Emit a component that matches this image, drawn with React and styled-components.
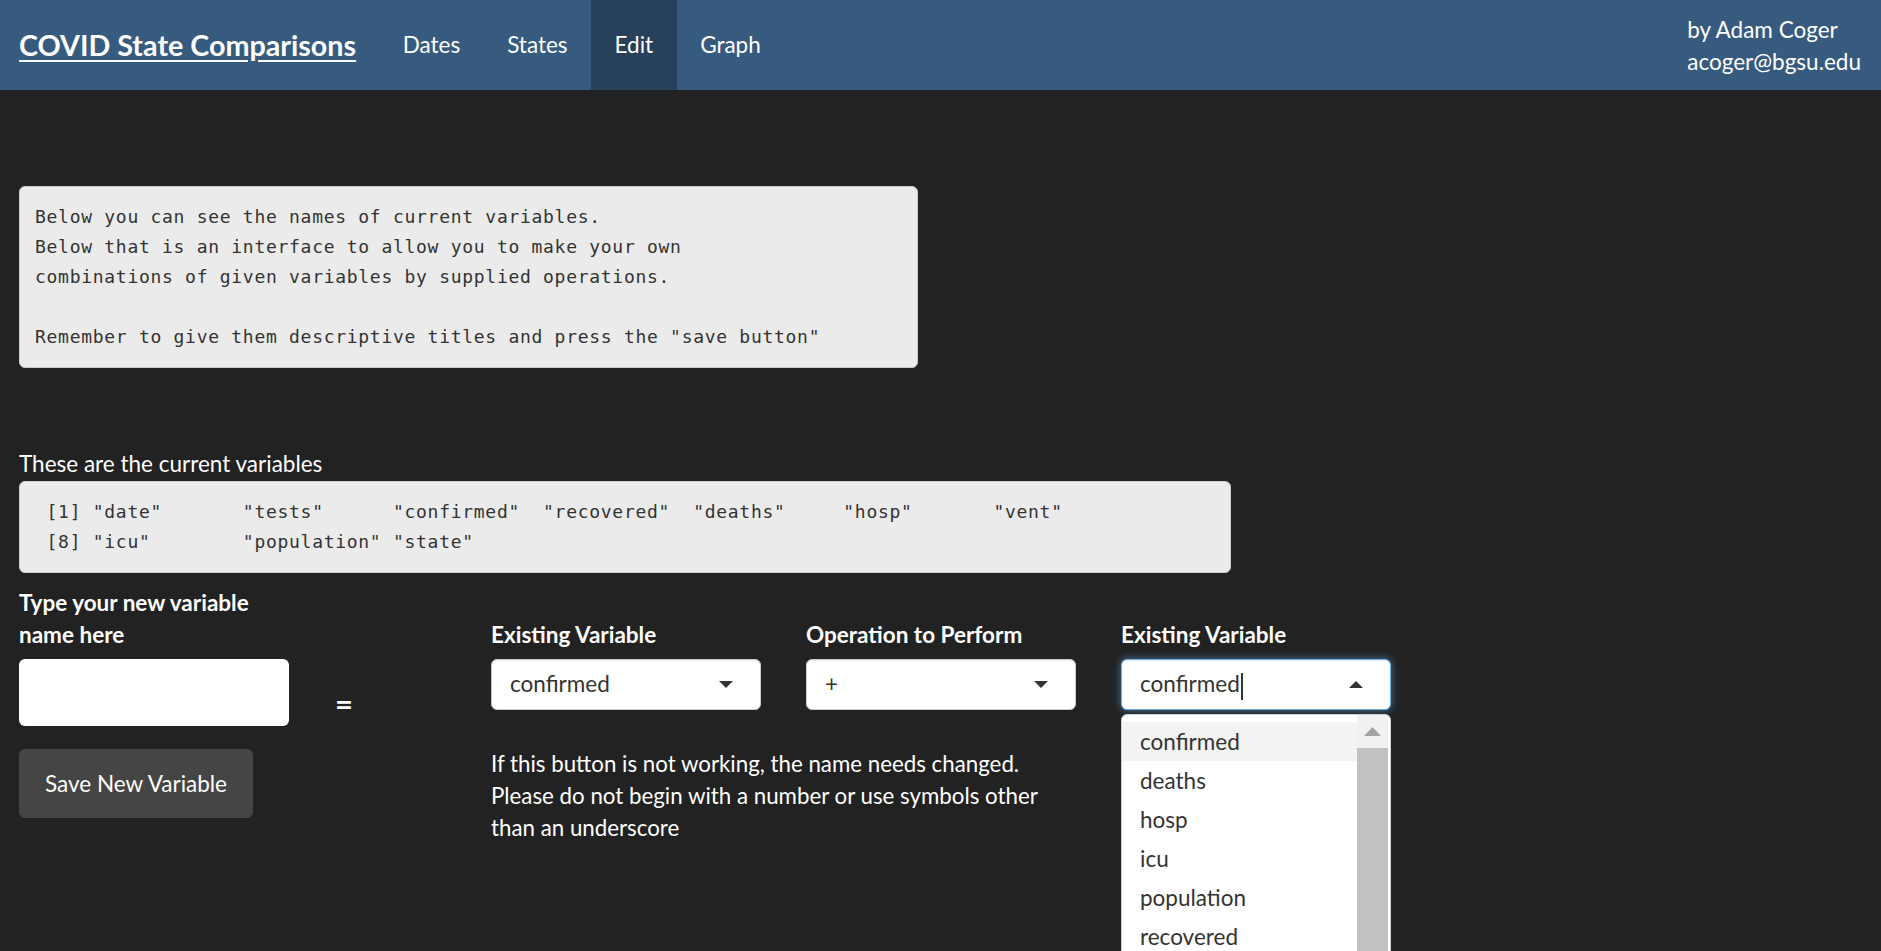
import React from 'react';
import styled, { createGlobalStyle } from 'styled-components';

const GlobalStyle = createGlobalStyle`
  html, body {
    margin: 0;
    padding: 0;
    height: 100%;
    overflow: hidden;
    background: #222222;
  }
  body {
    font-family: Lato, "Noto Sans", sans-serif;
    font-size: 22.5px;
    line-height: 32px;
    color: #ffffff;
  }
`;

const Navbar = styled.nav`
  display: flex;
  align-items: center;
  height: 90px;
  padding: 0 20px 0 19px;
  background: #375a7f;
`;

const Brand = styled.a`
  font-size: 28.7px;
  font-weight: 700;
  color: #fff;
  text-decoration: underline;
  text-underline-offset: 4px;
  padding-right: 23px;
`;

const NavLink = styled.a`
  display: flex;
  align-items: center;
  height: 90px;
  padding: 0 23.5px;
  color: #fff;
  background: ${(p) => (p.$active ? '#28415b' : 'transparent')};
`;

const Byline = styled.div`
  margin-left: auto;
  padding-top: 2px;
  line-height: 32px;
`;

const Main = styled.main`
  padding: 96px 19px 0;
`;

const Pre = styled.pre`
  margin: 0;
  padding: 15px;
  width: ${(p) => p.$width};
  box-sizing: border-box;
  background: #ebebeb;
  border: 1px solid #cccccc;
  border-radius: 6px;
  color: #333333;
  font-family: "DejaVu Sans Mono", "Liberation Mono", monospace;
  font-size: 18px;
  letter-spacing: 0.71px;
  line-height: 30px;
  white-space: pre;
`;

const Caption = styled.div`
  margin-top: 80px;
  margin-bottom: 1px;
`;

const Form = styled.div`
  display: grid;
  grid-template-columns: 270px 112px 270px 270px 270px;
  grid-template-areas:
    "name . lv op rv"
    "input eq lsel opsel rsel"
    "save . help help .";
  column-gap: 45px;
  margin-top: 14px;
  align-items: start;
`;

const Label = styled.label`
  grid-area: ${(p) => p.$area};
  align-self: end;
  font-weight: 700;
  margin-bottom: 7.5px;
`;

const TextInput = styled.input`
  grid-area: input;
  height: 67.5px;
  box-sizing: border-box;
  border: none;
  border-radius: 6px;
  background: #fff;
  font: inherit;
  padding: 0 22px;
`;

const Equals = styled.div`
  grid-area: eq;
  padding-top: 28px;
  padding-left: 1px;
  font-size: 31px;
  font-weight: 700;
`;

const SelectWrap = styled.div`
  grid-area: ${(p) => p.$area};
  position: relative;
`;

const SelectBox = styled.div`
  display: flex;
  align-items: center;
  justify-content: space-between;
  height: 51px;
  box-sizing: border-box;
  padding: 0 27px 0 18px;
  background: #fff;
  color: #333;
  border: 1px solid ${(p) => (p.$focused ? '#66afe9' : '#cccccc')};
  border-radius: 6px;
  box-shadow: ${(p) =>
    p.$focused
      ? 'inset 0 1px 1px rgba(0,0,0,.075), 0 0 8px rgba(102,175,233,.6)'
      : 'inset 0 1px 1px rgba(0,0,0,.075)'};
`;

const Cursor = styled.span`
  display: inline-block;
  width: 2px;
  height: 27px;
  background: #333;
  vertical-align: middle;
  margin-left: 1px;
`;

const Caret = styled.span`
  width: 0;
  height: 0;
  border-left: 7.5px solid transparent;
  border-right: 7.5px solid transparent;
  ${(p) => (p.$up ? 'border-bottom: 7.5px solid #333;' : 'border-top: 7.5px solid #333;')}
`;

const Dropdown = styled.div`
  position: absolute;
  top: calc(100% + 4px);
  left: 0;
  right: 0;
  height: 260px;
  display: flex;
  background: #fff;
  border: 1px solid #d0d0d0;
  border-radius: 6px 6px 0 0;
  overflow: hidden;
  z-index: 10;
`;

const OptionList = styled.div`
  flex: 1;
  padding-top: 7px;
`;

const Option = styled.div`
  height: 39px;
  line-height: 39px;
  padding: 0 18px;
  color: #333;
  background: ${(p) => (p.$active ? '#f3f3f3' : 'transparent')};
`;

const Scrollbar = styled.div`
  width: 31px;
  margin-right: 2px;
  display: flex;
  flex-direction: column;
  background: #f1f1f1;
`;

const ScrollArrow = styled.div`
  height: 33px;
  display: flex;
  align-items: center;
  justify-content: center;
`;

const Thumb = styled.div`
  flex: 1;
  background: #c1c1c1;
`;

const SaveButton = styled.button`
  grid-area: save;
  justify-self: start;
  margin-top: 23px;
  width: 234px;
  height: 69px;
  border: none;
  border-radius: 6px;
  background: #464545;
  color: #fff;
  font: inherit;
  line-height: 32px;
`;

const Help = styled.p`
  grid-area: help;
  margin: 22px 0 0;
  font-size: 22.3px;
`;

const options = ['confirmed', 'deaths', 'hosp', 'icu', 'population', 'recovered', 'state', 'tests', 'vent'];

const intro = `Below you can see the names of current variables.
Below that is an interface to allow you to make your own
combinations of given variables by supplied operations.

Remember to give them descriptive titles and press the "save button"`;

const vars = ` [1] "date"       "tests"      "confirmed"  "recovered"  "deaths"     "hosp"       "vent"
 [8] "icu"        "population" "state"`;

export default function App() {
  return (
    <>
      <GlobalStyle />
      <Navbar>
        <Brand>COVID State Comparisons</Brand>
        <NavLink>Dates</NavLink>
        <NavLink>States</NavLink>
        <NavLink $active>Edit</NavLink>
        <NavLink>Graph</NavLink>
        <Byline>
          by Adam Coger
          <br />
          acoger@bgsu.edu
        </Byline>
      </Navbar>
      <Main>
        <Pre $width="899px">{intro}</Pre>
        <Caption>These are the current variables</Caption>
        <Pre $width="1212px">{vars}</Pre>
        <Form>
          <Label $area="name">Type your new variable name here</Label>
          <Label $area="lv">Existing Variable</Label>
          <Label $area="op">Operation to Perform</Label>
          <Label $area="rv">Existing Variable</Label>

          <TextInput type="text" />
          <Equals>=</Equals>
          <SelectWrap $area="lsel">
            <SelectBox>
              <span>confirmed</span>
              <Caret />
            </SelectBox>
          </SelectWrap>
          <SelectWrap $area="opsel">
            <SelectBox>
              <span>+</span>
              <Caret />
            </SelectBox>
          </SelectWrap>
          <SelectWrap $area="rsel">
            <SelectBox $focused>
              <span>
                confirmed<Cursor />
              </span>
              <Caret $up />
            </SelectBox>
            <Dropdown>
              <OptionList>
                {options.map((o, i) => (
                  <Option key={o} $active={i === 0}>
                    {o}
                  </Option>
                ))}
              </OptionList>
              <Scrollbar>
                <ScrollArrow>
                  <svg width="17" height="9" viewBox="0 0 17 9">
                    <polygon points="0,9 8.5,0 17,9" fill="#a3a3a3" />
                  </svg>
                </ScrollArrow>
                <Thumb />
              </Scrollbar>
            </Dropdown>
          </SelectWrap>

          <SaveButton>Save New Variable</SaveButton>
          <Help>
            If this button is not working, the name needs changed. Please do not begin with a number or use
            symbols other than an underscore
          </Help>
        </Form>
      </Main>
    </>
  );
}
